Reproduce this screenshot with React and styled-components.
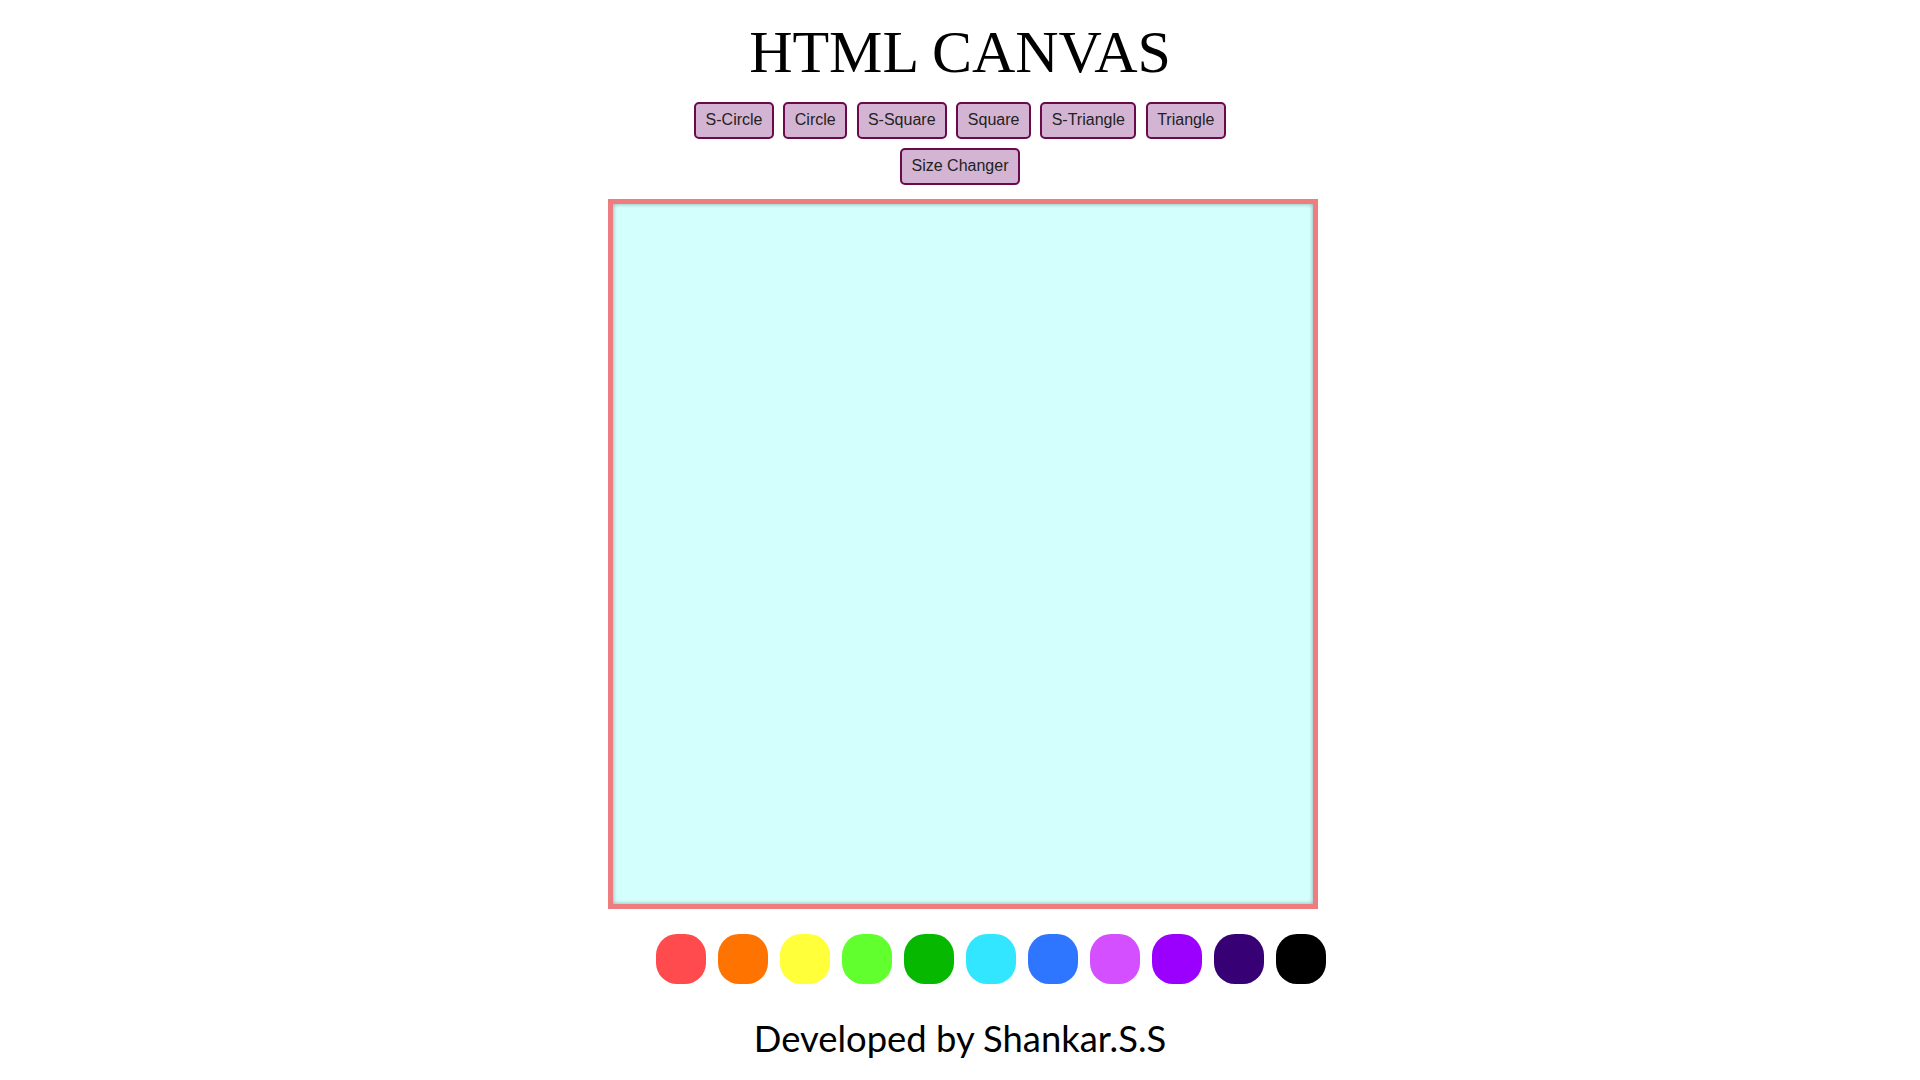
import React, { useState } from 'react';
import styled, { createGlobalStyle } from 'styled-components';

const GlobalStyle = createGlobalStyle`
  html, body {
    margin: 0;
    padding: 0;
    background: #ffffff;
  }
`;

const tools = ['S-Circle', 'Circle', 'S-Square', 'Square', 'S-Triangle', 'Triangle', 'Size Changer'];

const colors = [
  '#ff4b4d',
  '#ff7400',
  '#ffff3a',
  '#62ff2e',
  '#06b800',
  '#32e6ff',
  '#2e75ff',
  '#d44fff',
  '#9b00ff',
  '#370075',
  '#000000',
];

const App = () => {
  const [tool, setTool] = useState('S-Circle');
  const [color, setColor] = useState(colors[0]);

  return (
    <Page>
      <GlobalStyle />
      <Title>HTML CANVAS</Title>
      <Toolbar>
        {tools.map((t) => (
          <ToolButton key={t} onClick={() => setTool(t)} aria-pressed={tool === t}>
            {t}
          </ToolButton>
        ))}
      </Toolbar>
      <Board width={700} height={700} />
      <Palette>
        {colors.map((c) => (
          <Swatch key={c} color={c} onClick={() => setColor(c)} aria-label={c} aria-pressed={color === c} />
        ))}
      </Palette>
      <Footer>Developed by Shankar.S.S</Footer>
    </Page>
  );
};

export default App;

const Page = styled.div`
  display: flex;
  flex-direction: column;
  align-items: center;
  min-height: 1080px;
  box-sizing: border-box;
`;

const Title = styled.h1`
  margin: 19px 0 0;
  font-family: 'Liberation Serif', 'Times New Roman', serif;
  font-size: 60px;
  font-weight: 400;
  line-height: 66px;
  color: #000;
`;

const Toolbar = styled.div`
  display: flex;
  flex-wrap: wrap;
  justify-content: center;
  width: 545px;
  column-gap: 9.5px;
  row-gap: 9px;
  margin-top: 16.5px;
`;

const ToolButton = styled.button`
  height: 37px;
  padding: 0 9.4px;
  box-sizing: border-box;
  background: #d4b4d3;
  border: 2px solid #6a0a4c;
  border-radius: 5px;
  font-family: 'Liberation Sans', Arial, sans-serif;
  font-size: 16px;
  color: #222;
  cursor: pointer;
`;

const Board = styled.canvas`
  display: block;
  width: 700px;
  height: 700px;
  margin: 14px 0 0 6px;
  background: #d3fffd;
  border: 5px solid #ee7d80;
  box-shadow: inset 0 0 4px rgba(0, 0, 0, 0.35);
`;

const Palette = styled.div`
  display: flex;
  justify-content: center;
  gap: 12px;
  margin-top: 25px;
  padding-left: 62px;
`;

const Swatch = styled.button`
  width: 50px;
  height: 50px;
  padding: 0;
  border: none;
  border-radius: 21px;
  background: ${({ color }) => color};
  cursor: pointer;
`;

const Footer = styled.div`
  margin-top: 32px;
  font-family: Lato, 'Open Sans', sans-serif;
  font-size: 36.4px;
  color: #000;
`;
